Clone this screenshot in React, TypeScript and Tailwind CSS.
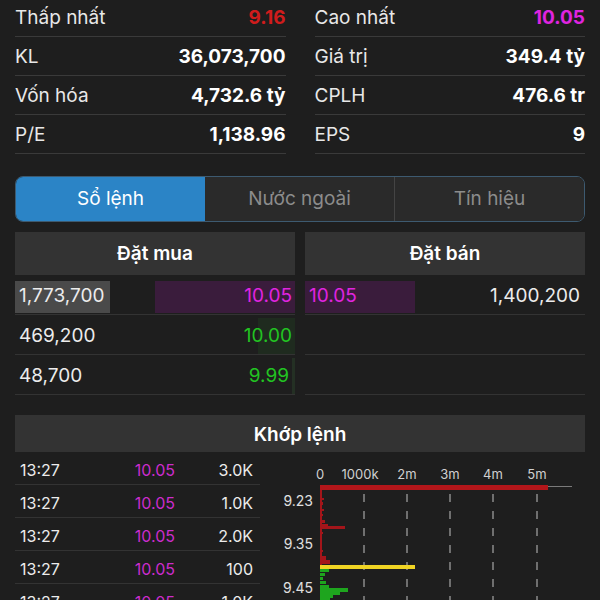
import React from "react"

const stats: [string, string, string][] = [
  ["Thấp nhất", "9.16", "text-[#d01c1c]"],
  ["Cao nhất", "10.05", "text-[#e024e0]"],
  ["KL", "36,073,700", "text-white"],
  ["Giá trị", "349.4 tỷ", "text-white"],
  ["Vốn hóa", "4,732.6 tỷ", "text-white"],
  ["CPLH", "476.6 tr", "text-white"],
  ["P/E", "1,138.96", "text-white"],
  ["EPS", "9", "text-white"],
]

const trades = [
  ["13:27", "10.05", "3.0K"],
  ["13:27", "10.05", "1.0K"],
  ["13:27", "10.05", "2.0K"],
  ["13:27", "10.05", "100"],
  ["13:27", "10.05", "1.0K"],
]

// [y, width, height]
const redBars: [number, number, number][] = [
  [36, 2, 76],
  [44, 4, 2],
  [48, 3, 3],
  [55, 4, 2],
  [60, 3, 2],
  [66, 5, 3],
  [70, 8, 3],
  [72, 25, 3],
  [78, 3, 2],
  [86, 2, 3],
  [96, 3, 2],
  [102, 6, 4],
  [106, 10, 4],
]

const greenBars: [number, number, number][] = [
  [115, 9, 3],
  [119, 5, 3],
  [123, 3, 3],
  [127, 6, 3],
  [131, 9, 3],
  [134, 28, 4],
  [138, 20, 3],
  [141, 13, 3],
  [144, 10, 4],
]

function Chart() {
  const ticks = [
    { x: 40, label: "0" },
    { x: 80, label: "1000k" },
    { x: 127, label: "2m" },
    { x: 170, label: "3m" },
    { x: 213, label: "4m" },
    { x: 257, label: "5m" },
  ]
  return (
    <svg width="305" height="148" viewBox="0 0 305 148" className="block">
      {ticks.map((t) => (
        <text key={t.label} x={t.x} y={25} fill="#d0d0d0" fontSize="13" textAnchor="middle" fontFamily="Inter, sans-serif">
          {t.label}
        </text>
      ))}
      {[84, 127, 170, 213, 257].map((x) => (
        <line key={x} x1={x} x2={x} y1={40} y2={148} stroke="#8a8a8a" strokeWidth="1.5" strokeDasharray="8 9" />
      ))}
      <line x1={40} x2={292} y1={32.5} y2={32.5} stroke="#7a7a7a" strokeWidth="1" />
      <rect x={40} y={31} width={228} height={5} fill="#b3161a" />
      {redBars.map(([y, w, h], i) => (
        <rect key={i} x={40} y={y} width={w} height={h} fill="#a3151a" />
      ))}
      <rect x={40} y={111} width={95} height={4} fill="#f0d424" />
      {greenBars.map(([y, w, h], i) => (
        <rect key={i} x={40} y={y} width={w} height={h} fill="#1ea51e" />
      ))}
      {[
        { y: 52, label: "9.23" },
        { y: 95, label: "9.35" },
        { y: 139, label: "9.45" },
      ].map((l) => (
        <text key={l.label} x={33} y={l.y} fill="#e0e0e0" fontSize="14" textAnchor="end" fontFamily="Inter, sans-serif">
          {l.label}
        </text>
      ))}
    </svg>
  )
}

export default function App() {
  return (
    <div
      className="w-[600px] h-[600px] overflow-hidden bg-[#1e1e1e] text-white"
      style={{ fontFamily: "Inter, 'Liberation Sans', sans-serif" }}
    >
      {/* stats */}
      <div className="-mt-[2px] px-[15px] grid grid-cols-2 gap-x-[29px]">
        {stats.map(([label, value, color]) => (
          <div key={label} className="h-[39px] pt-[2px] flex items-center justify-between border-b border-[#3a3a3a]">
            <span className="text-[19px] text-[#e8e8e8]">{label}</span>
            <span className={`text-[19px] font-bold ${color}`}>{value}</span>
          </div>
        ))}
      </div>

      {/* tabs */}
      <div className="mx-[15px] mt-[22px] h-[46px] flex rounded-[8px] border border-[#3d5a70] overflow-hidden">
        <div className="flex-1 flex items-center justify-center bg-[#2b84c6] text-[19px] text-white">Sổ lệnh</div>
        <div className="flex-1 flex items-center justify-center bg-[#2a2a2a] text-[19px] text-[#8c8c8c] border-r border-[#444]">
          Nước ngoài
        </div>
        <div className="flex-1 flex items-center justify-center bg-[#2a2a2a] text-[19px] text-[#8c8c8c]">Tín hiệu</div>
      </div>

      {/* order book */}
      <div className="mx-[15px] mt-[10px] grid grid-cols-2 gap-x-[10px]">
        <div className="h-[43px] pt-[2px] flex items-center justify-center bg-[#333333] text-[19px] font-semibold">Đặt mua</div>
        <div className="h-[43px] pt-[2px] flex items-center justify-center bg-[#333333] text-[19px] font-semibold">Đặt bán</div>

        <div className="h-[40px] flex items-center justify-between border-b border-[#333]">
          <span className="mt-[4px] h-[32px] w-[95px] flex items-center pl-[4px] bg-[#4a4a4a] text-[19px] text-[#ececec]">1,773,700</span>
          <span className="mt-[4px] h-[32px] w-[140px] flex items-center justify-end pr-[3px] bg-[#3a1c3c] text-[19px] text-[#e024e0]">
            10.05
          </span>
        </div>
        <div className="h-[40px] flex items-center justify-between border-b border-[#333]">
          <span className="mt-[4px] h-[32px] w-[110px] flex items-center pl-[4px] bg-[#3a1c3c] text-[19px] text-[#e024e0]">10.05</span>
          <span className="mt-[4px] pr-[5px] text-[19px] text-[#ececec]">1,400,200</span>
        </div>

        <div className="h-[40px] pt-[3px] flex items-center justify-between border-b border-[#333]">
          <span className="pl-[4px] text-[19px] text-[#ececec]">469,200</span>
          <span className="h-[36px] w-[37px] flex items-center justify-end pr-[3px] bg-[#1f2b1f] text-[19px] text-[#22c422] whitespace-nowrap">
            <span className="-ml-[40px]">10.00</span>
          </span>
        </div>
        <div className="h-[40px] border-b border-[#333]" />

        <div className="h-[40px] pt-[3px] flex items-center justify-between border-b border-[#333]">
          <span className="pl-[4px] text-[19px] text-[#ececec]">48,700</span>
          <span className="h-[36px] flex items-center justify-end pr-[3px] border-r-[3px] border-[#243024] text-[19px] text-[#22c422]">9.99</span>
        </div>
        <div className="h-[40px] border-b border-[#333]" />
      </div>

      {/* matched orders */}
      <div className="mx-[15px] mt-[20px] h-[37px] pt-[3px] flex items-center justify-center bg-[#333333] text-[19px] font-semibold">
        Khớp lệnh
      </div>
      <div className="flex pl-[15px]">
        <div className="w-[245px] shrink-0">
          {trades.map(([time, price, vol], i) => (
            <div key={i} className="h-[33px] pt-[3px] grid grid-cols-[1fr_60px_85px] items-center border-b border-[#333] text-[16px]">
              <span className="pl-[5px] text-[#ececec]">{time}</span>
              <span className="text-right text-[#cc2ccc]">{price}</span>
              <span className="text-right pr-[7px] text-[#ececec]">{vol}</span>
            </div>
          ))}
        </div>
        <div className="ml-[20px] mt-[2px]">
          <Chart />
        </div>
      </div>
    </div>
  )
}
